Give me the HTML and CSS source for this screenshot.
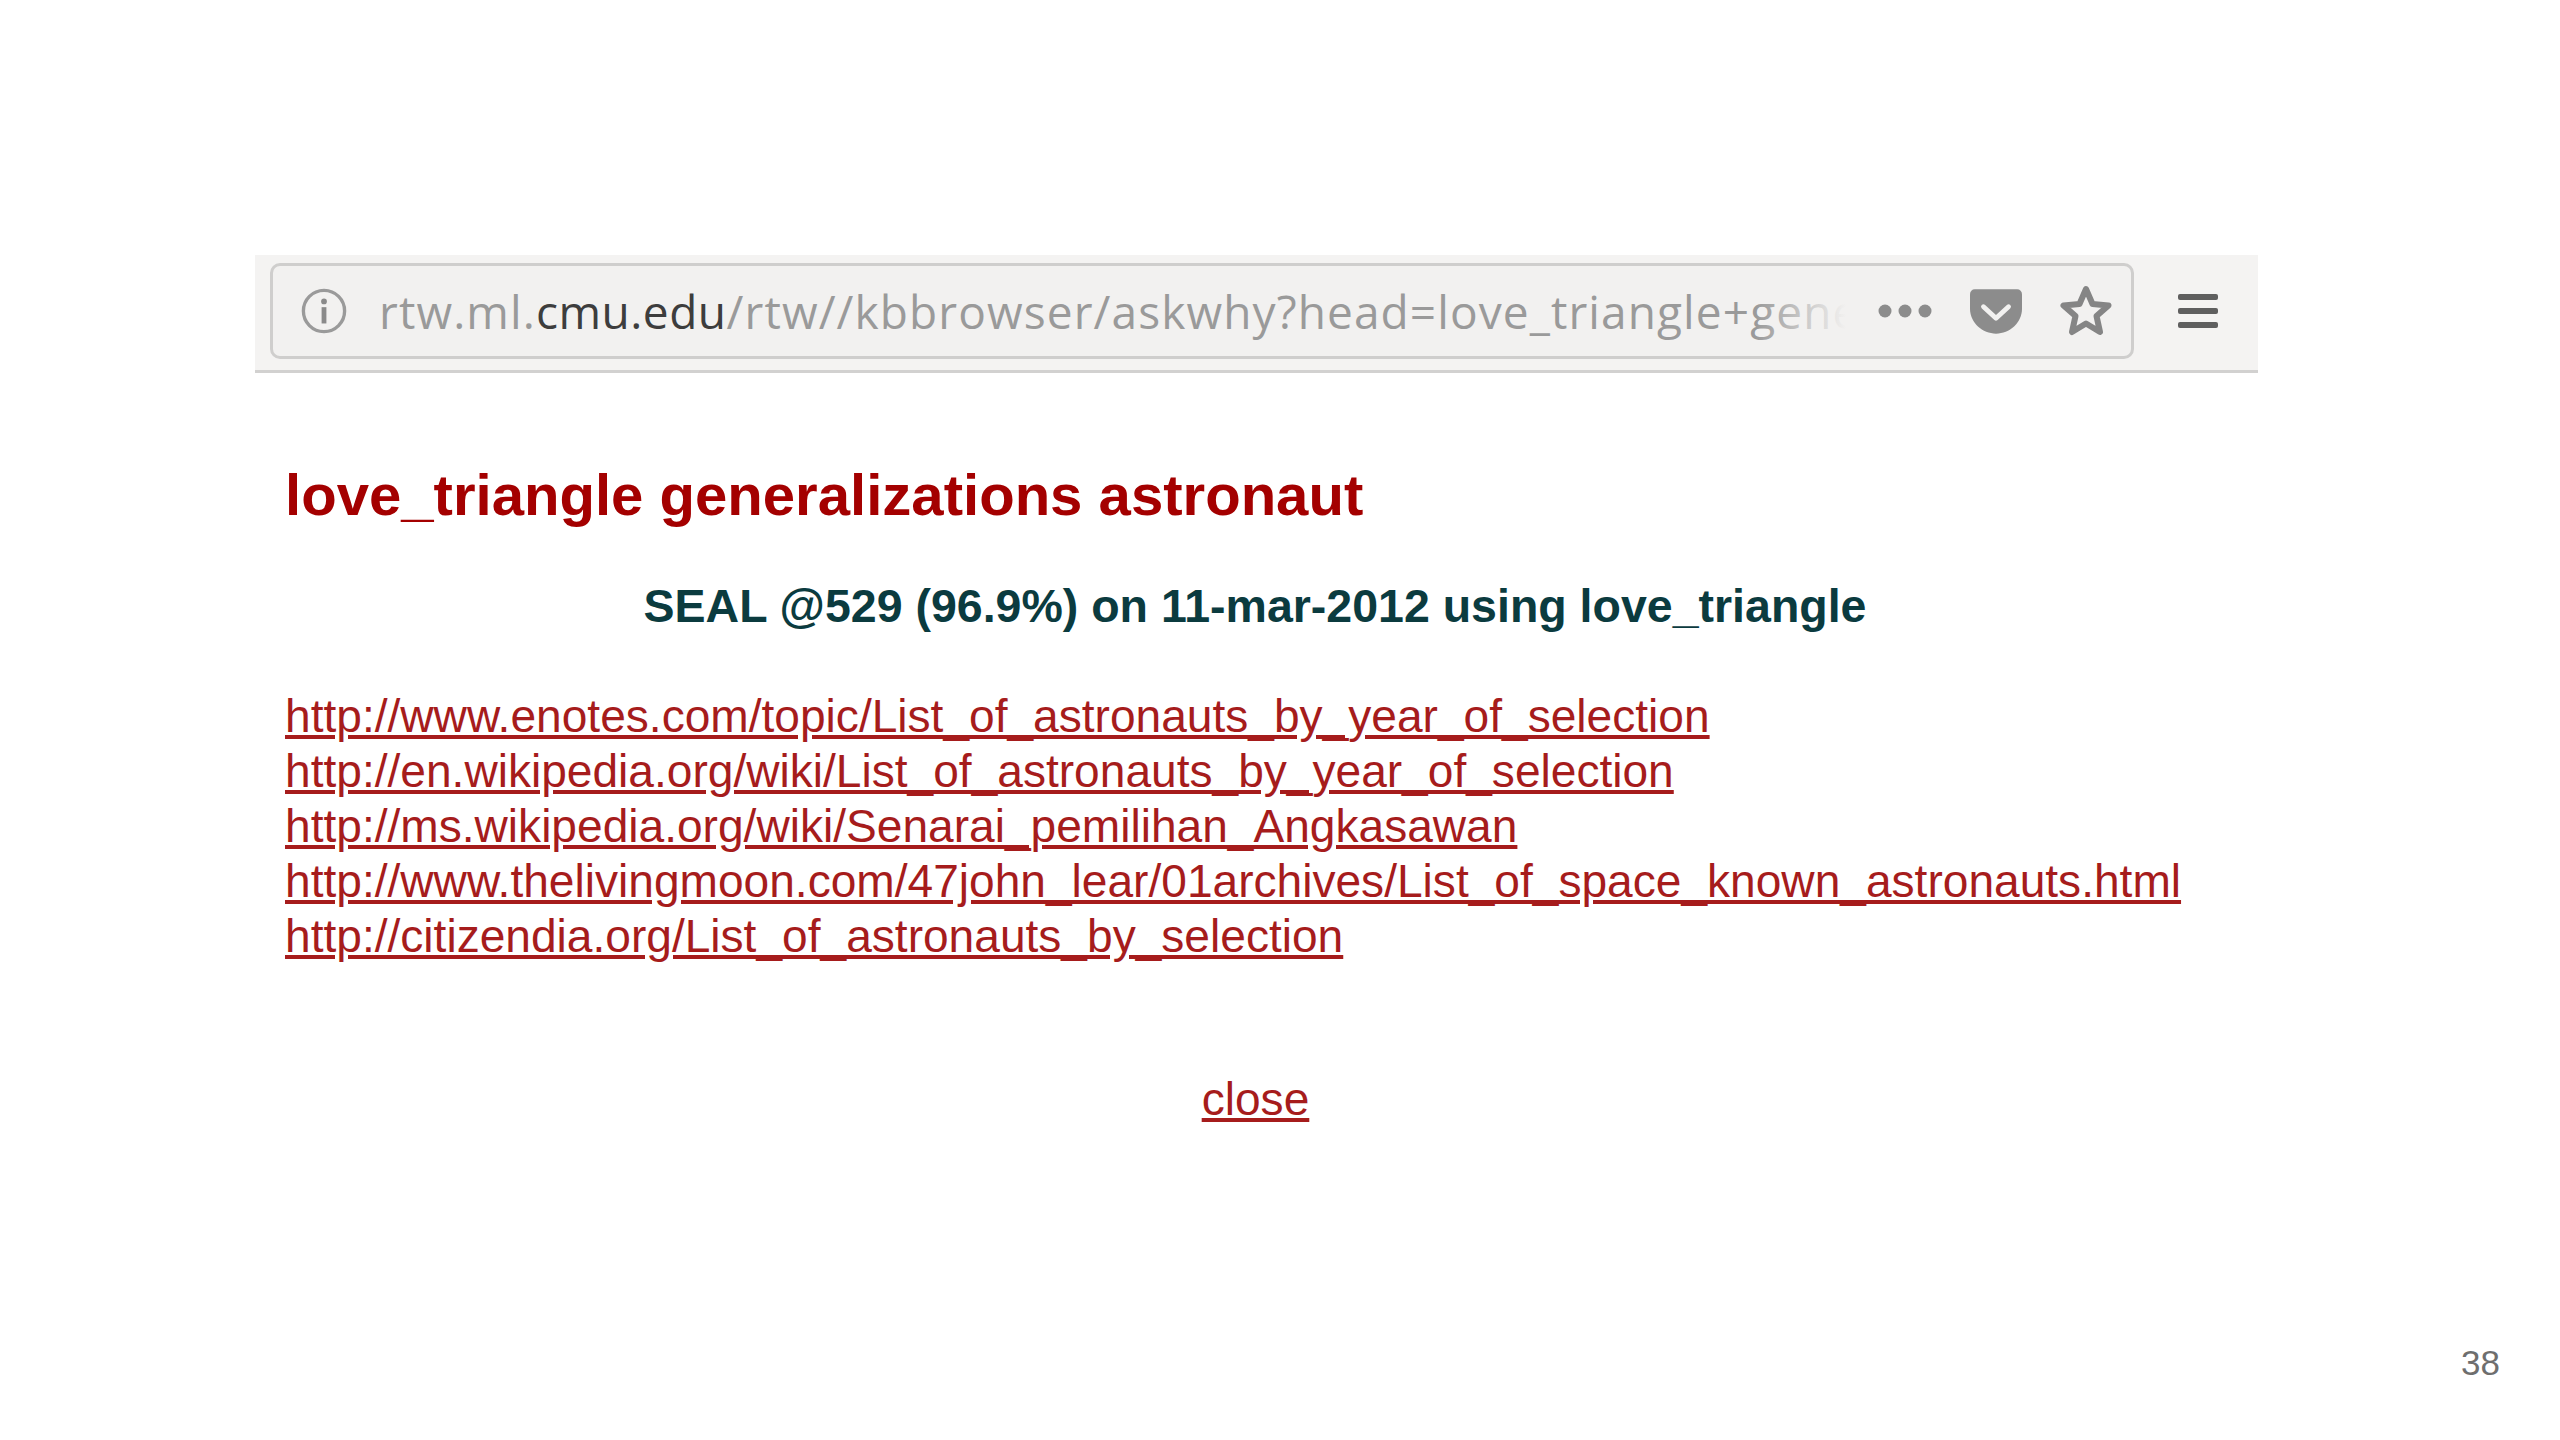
FILE: index.html
```html
<!DOCTYPE html>
<html lang="en">
<head>
    <meta charset="UTF-8">
    <title>love_triangle generalizations astronaut</title>
    <link rel="stylesheet" href="styles.css">
</head>
<body>
    <div class="slide">
        <!-- Browser toolbar -->
        <div class="toolbar">
            <div class="url-bar">
                <svg class="info-icon" viewBox="0 0 48 48" width="46" height="46">
                    <circle cx="24" cy="24" r="21.500" fill="none" stroke="#9a9a9a" stroke-width="3.5"/>
                    <circle cx="24" cy="14" r="3" fill="#8a8a8a"/>
                    <rect x="21.5" y="20" width="5" height="17" fill="#8a8a8a"/>
                </svg>
                <div class="url-text"><span class="url-dim">rtw.ml.</span><span class="url-host">cmu.edu</span><span class="url-dim">/rtw//kbbrowser/askwhy?head=love_triangle+generalizations+astronaut</span></div>
                <div class="url-fade"></div>
                <svg class="dots-icon" viewBox="0 0 54 14" width="54" height="14">
                    <circle cx="7" cy="7" r="6.500" fill="#8c8c8c"/>
                    <circle cx="27" cy="7" r="6.500" fill="#8c8c8c"/>
                    <circle cx="47" cy="7" r="6.500" fill="#8c8c8c"/>
                </svg>
                <svg class="pocket-icon" viewBox="0 0 54 46" width="52" height="45">
                    <path d="M5 0H49A5 5 0 0 1 54 5V20C54 35 41 46 27 46C13 46 0 35 0 20V5A5 5 0 0 1 5 0Z" fill="#8c8c8c"/>
                    <path d="M14 18L27 30L40 18" fill="none" stroke="#f2f1f0" stroke-width="5" stroke-linecap="round" stroke-linejoin="round"/>
                </svg>
                <svg class="star-icon" viewBox="0 0 54 54" width="54" height="54">
                    <path d="M27 5L33.500 20L49.500 21.500L37.500 32L41 48L27 39.500L13 48L16.500 32L4.500 21.500L20.500 20Z" fill="none" stroke="#858585" stroke-width="6" stroke-linejoin="round"/>
                </svg>
            </div>
            <svg class="menu-icon" viewBox="0 0 40 40" width="40" height="40">
                <rect x="0" y="3" width="40" height="6" rx="2" fill="#5f5f5f"/>
                <rect x="0" y="17" width="40" height="6" rx="2" fill="#5f5f5f"/>
                <rect x="0" y="31" width="40" height="6" rx="2" fill="#5f5f5f"/>
            </svg>
        </div>

        <!-- Page content -->
        <div class="content">
            <h1>love_triangle generalizations astronaut</h1>
            <h2>SEAL @529 (96.9%) on 11-mar-2012 using love_triangle</h2>
            <div class="links">
                <a href="#">http://www.enotes.com/topic/List_of_astronauts_by_year_of_selection</a>
                <a href="#">http://en.wikipedia.org/wiki/List_of_astronauts_by_year_of_selection</a>
                <a href="#">http://ms.wikipedia.org/wiki/Senarai_pemilihan_Angkasawan</a>
                <a href="#">http://www.thelivingmoon.com/47john_lear/01archives/List_of_space_known_astronauts.html</a>
                <a href="#">http://citizendia.org/List_of_astronauts_by_selection</a>
            </div>
            <div class="close-row"><a href="#">close</a></div>
        </div>

        <div class="page-number">38</div>
    </div>
</body>
</html>
```

FILE: styles.css
```css
html, body {
    margin: 0;
    padding: 0;
    background-color: #fff;
}

.slide {
    width: 2560px;
    height: 1440px;
    box-sizing: border-box;
    padding-top: 255px;
    display: flex;
    flex-direction: column;
    font-family: "Liberation Sans", Arial, sans-serif;
}

.toolbar {
    width: 2003px;
    height: 118px;
    margin-left: 255px;
    box-sizing: border-box;
    padding: 8px 0 11px 15px;
    display: flex;
    align-items: center;
    background-color: #f4f3f2;
    border-bottom: 3px solid #d2d1d0;
}

.url-bar {
    position: relative;
    flex: none;
    width: 1864px;
    height: 96px;
    box-sizing: border-box;
    padding-left: 28px;
    display: flex;
    align-items: center;
    background-color: #f2f1f0;
    border: 3px solid #cfcecd;
    border-radius: 10px;
}

.info-icon {
    flex: none;
}

.url-text {
    width: 1475px;
    margin-left: 32px;
    overflow: hidden;
    white-space: nowrap;
    font-family: "Open Sans", sans-serif;
    font-size: 46px;
    letter-spacing: 1.1px;
}

.url-dim {
    color: #9a9a9a;
}

.url-host {
    color: #3d3d3d;
    letter-spacing: 0.5px;
}

.url-fade {
    position: absolute;
    left: 1483px;
    top: 10px;
    width: 100px;
    height: 72px;
    background: linear-gradient(to right, rgba(242, 241, 240, 0), #f2f1f0 90%);
    pointer-events: none;
}

.dots-icon {
    flex: none;
    margin-left: 24px;
}

.pocket-icon {
    flex: none;
    margin-left: 38px;
}

.star-icon {
    flex: none;
    margin-left: 37px;
}

.menu-icon {
    flex: none;
    margin-left: 44px;
}

.content {
    width: 2000px;
    margin-left: 285px;
}

h1 {
    margin: 90px 0 0;
    font-size: 58.1px;
    line-height: 64px;
    font-weight: bold;
    color: #a40000;
}

h2 {
    margin: 52px 0 0;
    width: 1940px;
    text-align: center;
    font-size: 46.5px;
    line-height: 54px;
    font-weight: bold;
    color: #0b3b3f;
}

.links {
    margin-top: 56px;
    display: flex;
    flex-direction: column;
    align-items: flex-start;
}

a {
    font-size: 46.1px;
    line-height: 55px;
    color: #a61c1c;
    text-decoration: underline;
}

.close-row {
    margin-top: 108px;
    width: 1941px;
    text-align: center;
}

.page-number {
    margin-top: auto;
    margin-bottom: 57px;
    margin-right: 60px;
    align-self: flex-end;
    font-size: 35px;
    color: #6e6e6e;
}
```
